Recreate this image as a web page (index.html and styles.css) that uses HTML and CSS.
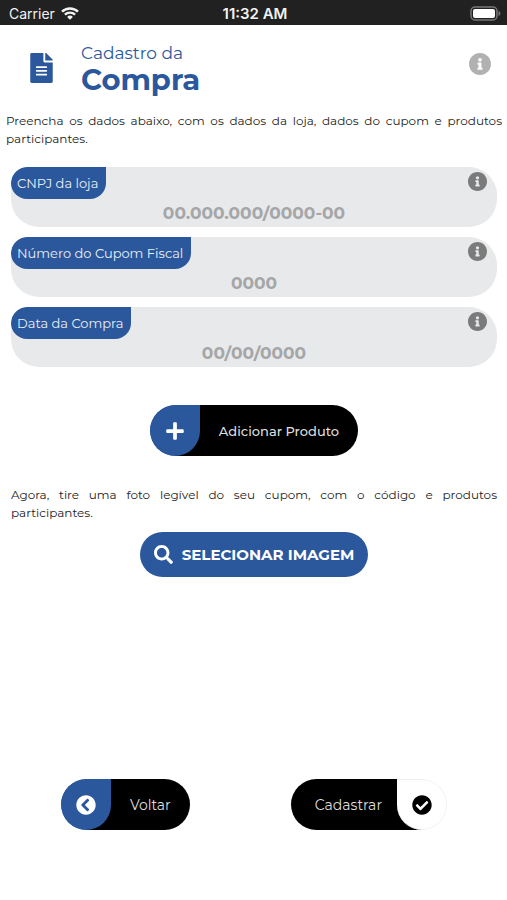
FILE: index.html
```html
<!DOCTYPE html>
<html lang="pt-BR">
<head>
<meta charset="utf-8">
<meta name="viewport" content="width=device-width, initial-scale=1">
<title>Cadastro da Compra</title>
<link rel="stylesheet" href="styles.css">
</head>
<body>
<svg class="sprite" aria-hidden="true">
  <symbol id="info" viewBox="8 8 496 496"><path d="M256 8C119.043 8 8 119.083 8 256c0 136.997 111.043 248 248 248s248-111.003 248-248C504 119.083 392.957 8 256 8zm0 110c23.196 0 42 18.804 42 42s-18.804 42-42 42-42-18.804-42-42 18.804-42 42-42zm56 254c0 6.627-5.373 12-12 12h-88c-6.627 0-12-5.373-12-12v-24c0-6.627 5.373-12 12-12h12v-64h-12c-6.627 0-12-5.373-12-12v-24c0-6.627 5.373-12 12-12h64c6.627 0 12 5.373 12 12v100h12c6.627 0 12 5.373 12 12v24z"/></symbol>
</svg>
<div class="status">
  <span class="carrier">Carrier
    <svg class="wifi" viewBox="0 0 18 13" fill="none" stroke="currentColor" stroke-width="2.4"><path d="M1 4.7a11.5 11.5 0 0 1 16 0M3.9 7.7a7.3 7.3 0 0 1 10.200 0"/><path d="M9 12.800 6.100 9.900a4.100 4.100 0 0 1 5.800 0z" fill="currentColor" stroke="none"/></svg>
  </span>
  <span class="clock">11:32 AM</span>
  <svg class="battery" viewBox="0 0 31 15"><rect x="1" y="1" width="26" height="13" rx="4" fill="none" stroke="#777" stroke-width="1.500"/><rect x="3" y="3" width="22" height="9" rx="2" fill="#fff"/><path d="M28.500 5c2.500 1 2.500 4 0 5z" fill="#777"/></svg>
</div>
<main>
  <header class="header">
    <svg class="file" viewBox="0 0 384 512"><path d="M224 136V0H24C10.700 0 0 10.700 0 24v464c0 13.300 10.700 24 24 24h336c13.300 0 24-10.700 24-24V160H248c-13.200 0-24-10.800-24-24zm64 236c0 6.600-5.400 12-12 12H108c-6.600 0-12-5.400-12-12v-8c0-6.600 5.400-12 12-12h168c6.600 0 12 5.400 12 12v8zm0-64c0 6.600-5.400 12-12 12H108c-6.600 0-12-5.400-12-12v-8c0-6.600 5.400-12 12-12h168c6.600 0 12 5.400 12 12v8zm0-72v8c0 6.600-5.400 12-12 12H108c-6.600 0-12-5.400-12-12v-8c0-6.600 5.400-12 12-12h168c6.600 0 12 5.400 12 12zm96-114.100v6.100H256V0h6.100c6.400 0 12.500 2.500 17 7l97.900 98c4.500 4.500 7 10.600 7 16.900z"/></svg>
    <h1 class="title"><span class="overline">Cadastro da</span>Compra</h1>
    <button class="info info-page" type="button" aria-label="Ajuda"><svg><use href="#info"/></svg></button>
  </header>
  <p class="intro">Preencha os dados abaixo, com os dados da loja, dados do cupom e produtos participantes.</p>
  <form class="form">
    <div class="field">
      <div class="field-top"><label for="cnpj">CNPJ da loja</label><button class="info" type="button" aria-label="Sobre o CNPJ"><svg><use href="#info"/></svg></button></div>
      <input id="cnpj" type="text" placeholder="00.000.000/0000-00">
    </div>
    <div class="field">
      <div class="field-top"><label for="cupom">Número do Cupom Fiscal</label><button class="info" type="button" aria-label="Sobre o cupom"><svg><use href="#info"/></svg></button></div>
      <input id="cupom" type="text" placeholder="0000">
    </div>
    <div class="field">
      <div class="field-top"><label for="data">Data da Compra</label><button class="info" type="button" aria-label="Sobre a data"><svg><use href="#info"/></svg></button></div>
      <input id="data" type="text" placeholder="00/00/0000">
    </div>
    <button class="pill add" type="button">
      <span class="cap"><svg viewBox="0 0 448 512"><path d="M416 208H272V64c0-17.670-14.330-32-32-32h-32c-17.670 0-32 14.330-32 32v144H32c-17.670 0-32 14.330-32 32v32c0 17.670 14.330 32 32 32h144v144c0 17.670 14.330 32 32 32h32c17.670 0 32-14.330 32-32V304h144c17.670 0 32-14.330 32-32v-32c0-17.670-14.330-32-32-32z"/></svg></span>
      <span class="text">Adicionar Produto</span>
    </button>
    <p class="photo">Agora, tire uma foto legível do seu cupom, com o código e produtos participantes.</p>
    <button class="select" type="button">
      <svg viewBox="0 0 512 512"><path d="M505 442.700L405.300 343c-4.500-4.500-10.600-7-17-7H372c27.600-35.300 44-79.700 44-128C416 93.100 322.900 0 208 0S0 93.100 0 208s93.100 208 208 208c48.300 0 92.700-16.400 128-44v16.300c0 6.400 2.500 12.500 7 17l99.700 99.700c9.400 9.400 24.600 9.400 33.900 0l28.300-28.300c9.400-9.400 9.400-24.600.1-34zM208 336c-70.700 0-128-57.200-128-128 0-70.700 57.200-128 128-128 70.700 0 128 57.200 128 128 0 70.700-57.200 128-128 128z"/></svg>
      SELECIONAR IMAGEM
    </button>
  </form>
  <footer class="footer">
    <button class="pill back" type="button">
      <span class="cap"><svg viewBox="0 0 512 512"><path d="M256 504C119 504 8 393 8 256S119 8 256 8s248 111 248 248-111 248-248 248zM142.100 273l135.500 135.500c9.400 9.400 24.600 9.400 33.900 0l17-17c9.400-9.400 9.400-24.600 0-33.900L226.900 256l101.600-101.600c9.400-9.400 9.400-24.600 0-33.900l-17-17c-9.400-9.400-24.600-9.400-33.900 0L142.100 239c-9.400 9.400-9.400 24.600 0 34z"/></svg></span>
      <span class="text">Voltar</span>
    </button>
    <button class="pill submit" type="submit">
      <span class="text">Cadastrar</span>
      <span class="cap cap-end"><svg viewBox="0 0 512 512"><path d="M504 256c0 136.967-111.033 248-248 248S8 392.967 8 256 119.033 8 256 8s248 111.033 248 248zM227.314 387.314l184-184c6.248-6.248 6.248-16.379 0-22.627l-22.627-22.627c-6.248-6.249-16.379-6.249-22.628 0L216 308.118l-70.059-70.059c-6.248-6.248-16.379-6.248-22.628 0l-22.627 22.627c-6.248 6.248-6.248 16.379 0 22.627l104 104c6.249 6.249 16.379 6.249 22.628.001z"/></svg></span>
    </button>
  </footer>
</main>
</body>
</html>
```
FILE: styles.css
```css
* { box-sizing: border-box; }

:root {
  --blue: #2b589d;
  --field: #e8e9eb;
}

body {
  margin: 0;
  min-height: 100vh;
  display: flex;
  flex-direction: column;
  background: #fff;
  color: #222;
  font-family: Montserrat, Inter, sans-serif;
  font-size: 12px;
}

svg { display: block; fill: currentColor; }
.sprite { display: none; }

button {
  border: 0;
  padding: 0;
  background: none;
  color: inherit;
  font: inherit;
  cursor: pointer;
}

.status {
  display: grid;
  grid-template-columns: 1fr auto 1fr;
  align-items: center;
  height: 25px;
  padding: 2px 6px 0 9px;
  background: #212121;
  color: #f2f2f2;
  font-family: Inter, sans-serif;
  font-size: 14px;
}
.carrier { display: flex; align-items: center; gap: 6px; }
.wifi { width: 18px; height: 13px; fill: none; }
.clock { font-size: 15px; font-weight: 600; }
.battery { width: 31px; height: 15px; justify-self: end; }

main {
  flex: 1;
  display: flex;
  flex-direction: column;
}

.header {
  display: flex;
  align-items: center;
  padding: 18px 16px 0 30px;
  color: var(--blue);
}
.file { width: 23px; height: 30px; margin: 0 28px 4px 0; }
.title {
  flex: 1;
  margin: 0;
  font-size: 29px;
  line-height: 34px;
  font-weight: 700;
}
.overline {
  display: block;
  font-size: 17px;
  line-height: 20px;
  font-weight: 400;
}

.info { color: #7b7b7b; }
.info svg { width: 19px; height: 19px; }
.info-page { color: #b1b1b1; }
.info-page svg { width: 22px; height: 22px; }
.header .info { align-self: flex-start; margin-top: 10px; }

p {
  line-height: 18px;
  text-align: justify;
}
.intro { margin: 15px 5px 0 6px; }

.form {
  display: flex;
  flex-direction: column;
  gap: 10px;
  padding: 19px 10px 0 11px;
}

.field {
  border-radius: 16px 28px 28px 28px;
  background: var(--field);
  overflow: hidden;
}
.field-top {
  display: flex;
  justify-content: space-between;
  align-items: flex-start;
  padding-right: 10px;
}
.field-top .info { margin-top: 5px; }
.field label {
  padding: 0 8px 0 6px;
  border-radius: 16px 0 16px 16px;
  background: var(--blue);
  color: #e9eef6;
  font-size: 13px;
  line-height: 32px;
}
.field input {
  display: block;
  width: 100%;
  height: 28px;
  padding: 0 10px;
  border: 0;
  background: transparent;
  color: #333;
  font: inherit;
  font-size: 17px;
  font-weight: 700;
  text-align: center;
}
.field input::placeholder { color: #a5a6a7; opacity: 1; }

.pill {
  display: flex;
  align-items: center;
  height: 51px;
  border-radius: 26px;
  background: linear-gradient(to right, var(--blue) 25px, #000 25px);
  color: #dedede;
  font-size: 14px;
  overflow: hidden;
}
.pill .text { padding: 0 19px; }
.cap {
  display: flex;
  align-items: center;
  justify-content: center;
  width: 50px;
  height: 51px;
  border-radius: 26px 0 26px 26px;
  background: var(--blue);
  color: #fff;
}
.cap svg { width: 20px; height: 20px; }
.cap-end {
  border: 1px solid #eee;
  border-left: 0;
  border-radius: 0 26px 26px 26px;
  background: #fff;
  color: #000;
}

.add {
  align-self: center;
  margin-top: 28px;
  font-size: 13px;
  font-weight: 500;
}

.photo { margin: 20px 0 0; }

.select {
  align-self: center;
  display: flex;
  align-items: center;
  gap: 9px;
  height: 45px;
  padding: 0 14px;
  border-radius: 23px;
  background: var(--blue);
  color: #fff;
  font-size: 15px;
  font-weight: 700;
}
.select svg { width: 19px; height: 19px; }

.footer {
  display: flex;
  justify-content: space-between;
  margin-top: auto;
  padding: 20px 60px 70px 61px;
}
.submit {
  background: linear-gradient(to left, #fff 25px, #000 25px);
}
.submit .text { padding: 0 15px 0 24px; }
```
